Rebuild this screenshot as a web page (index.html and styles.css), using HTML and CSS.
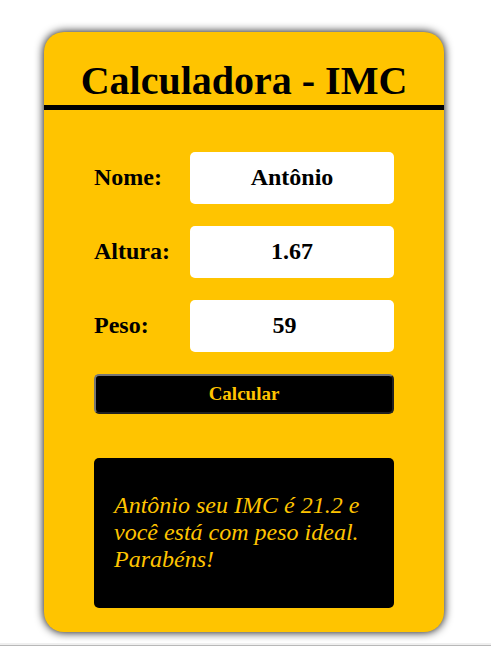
FILE: index.html
```
<!DOCTYPE html>
<html lang="pt-BR">
<head>
<meta charset="utf-8">
<title>Calculadora - IMC</title>
<link rel="stylesheet" href="styles.css">
</head>
<body>
<main class="page">
  <form class="card">
    <h1 class="title">Calculadora - IMC</h1>
    <div class="content">
      <div class="field"><label for="nome">Nome:</label><input id="nome" type="text" value="Antônio"></div>
      <div class="field"><label for="altura">Altura:</label><input id="altura" type="text" value="1.67"></div>
      <div class="field"><label for="peso">Peso:</label><input id="peso" type="number" value="59"></div>
      <button class="calculate" type="button">Calcular</button>
      <output class="result">Antônio seu IMC é 21.2 e você está com peso ideal. Parabéns!</output>
    </div>
  </form>
</main>
<hr class="divider">
</body>
</html>
```
FILE: styles.css
```
* {
  box-sizing: border-box;
}

body {
  margin: 0;
  background: #fff;
  color: #000;
  font-family: "Liberation Serif", serif;
}

.page {
  padding: 32px 47px 11px 44px;
}

.divider {
  margin: 0;
  border: 0;
  border-top: 2px solid #efefef;
  border-bottom: 1px solid #b8b8b8;
}

.card {
  max-width: 400px;
  margin: 0 auto;
  padding-bottom: 24px;
  border-radius: 20px;
  background: #ffc400;
  box-shadow: 0 0 10px #000;
}

.title {
  margin: 0;
  padding: 26px 0 1px;
  border-bottom: 5px solid #000;
  font-size: 40px;
  line-height: 46px;
  text-align: center;
}

.content {
  display: flex;
  flex-direction: column;
  padding: 42px 50px 0;
}

.field {
  display: flex;
  align-items: center;
  justify-content: space-between;
  margin-bottom: 22px;
  font-size: 24px;
  font-weight: bold;
}

.field label {
  padding-bottom: 2px;
}

.field input {
  width: 68%;
  height: 52px;
  padding: 0 0 2px;
  border: 0;
  border-radius: 5px;
  background: #fff;
  color: #000;
  font: inherit;
  text-align: center;
}

.calculate {
  height: 40px;
  border: 2px outset #767676;
  border-radius: 5px;
  background: #000;
  color: #ffc400;
  font-family: inherit;
  font-size: 19px;
  font-weight: bold;
}

.result {
  display: block;
  min-height: 150px;
  margin-top: 44px;
  padding: 34px 20px;
  border-radius: 5px;
  background: #000;
  color: #ffc400;
  font-size: 24px;
  font-style: italic;
  line-height: 27px;
}
```
